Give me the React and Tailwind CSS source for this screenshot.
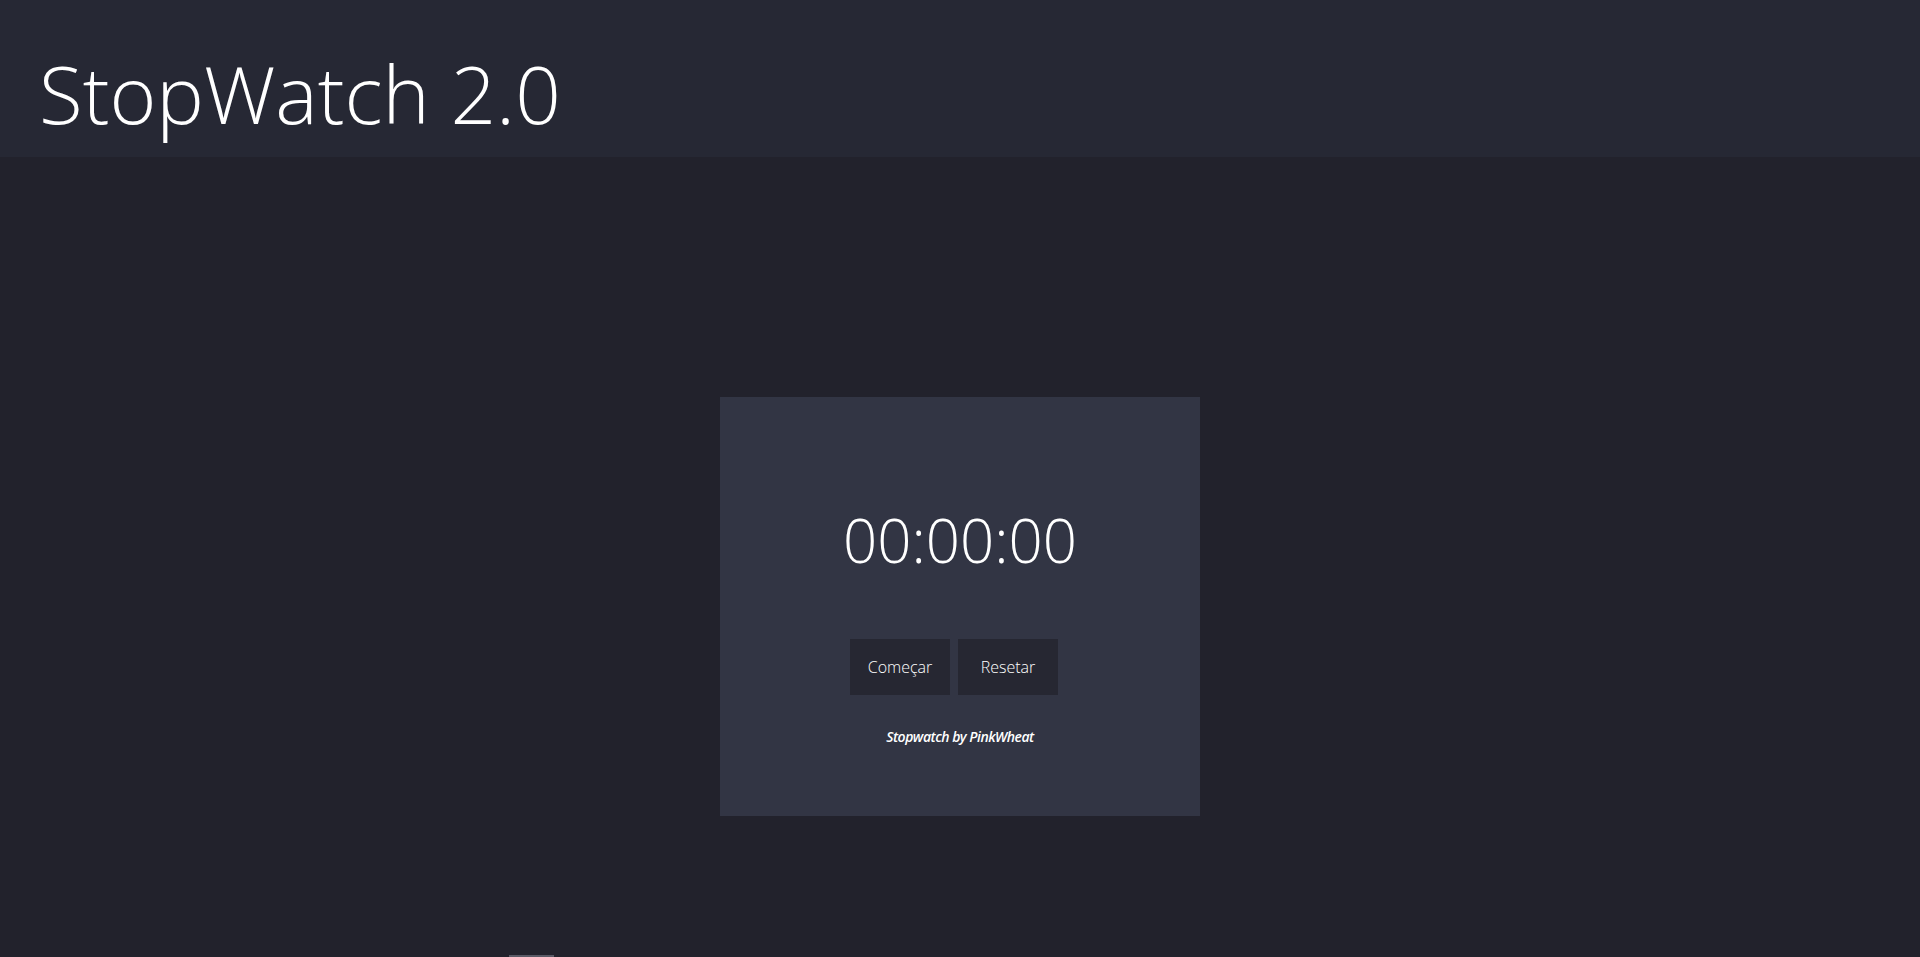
import React, { useState, useEffect, useRef } from 'react';

const pad = (n) => String(n).padStart(2, '0');

export default function App() {
  const [elapsed, setElapsed] = useState(0);
  const [running, setRunning] = useState(false);
  const timer = useRef(null);

  useEffect(() => {
    if (running) {
      timer.current = setInterval(() => setElapsed((t) => t + 1), 1000);
    }
    return () => clearInterval(timer.current);
  }, [running]);

  const h = Math.floor(elapsed / 3600);
  const m = Math.floor((elapsed % 3600) / 60);
  const s = elapsed % 60;

  return (
    <div className="min-h-[957px] bg-[#22222c] text-white font-['Open_Sans',sans-serif]">
      <header className="h-[157px] bg-[#262834] flex items-start px-[39px] pt-[53px]">
        <h1 className="text-[80px] font-light leading-none">StopWatch 2.0</h1>
      </header>

      <main className="flex justify-center pt-[240px]">
        <div className="w-[480px] h-[419px] bg-[#323544] flex flex-col items-center pt-[95px]">
          <div className="text-[60px] font-light leading-[96px]">
            {pad(h)}:{pad(m)}:{pad(s)}
          </div>
          <div className="flex gap-2 mt-[51px] pr-3">
            <button
              type="button"
              onClick={() => setRunning((r) => !r)}
              className="w-[100px] h-[56px] bg-[#262732] text-base font-light text-white"
            >
              {running ? 'Parar' : 'Começar'}
            </button>
            <button
              type="button"
              onClick={() => { setRunning(false); setElapsed(0); }}
              className="w-[100px] h-[56px] bg-[#262732] text-base font-light text-white"
            >
              Resetar
            </button>
          </div>
          <p className="mt-[32px] text-sm leading-5 italic font-semibold tracking-[-0.5px]">
            Stopwatch by PinkWheat
          </p>
        </div>
      </main>

      <div className="fixed bottom-0 left-[509px] w-[45px] h-[2px] bg-[#5a5a66]" />
    </div>
  );
}
